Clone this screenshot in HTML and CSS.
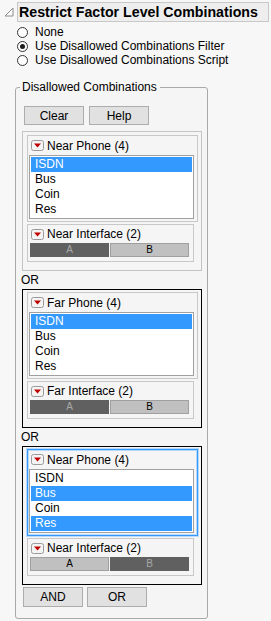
FILE: index.html
```html
<!DOCTYPE html>
<html>
<head>
<meta charset="UTF-8">
<meta name="viewport" content="width=device-width, initial-scale=1.0">
<title>Restrict Factor Level Combinations</title>
<link rel="stylesheet" href="styles.css">
</head>

<body>
<div class="outline">
    <svg class="disclosure" width="10" height="10" viewBox="0 0 10 10"><polygon points="9,1 9,9 1,9" fill="#fafafa" stroke="#8c8c8c"/></svg>
    <h1 class="title">Restrict Factor Level Combinations</h1>
</div>

<div class="choices">
    <div class="choice"><span class="radio"></span>None</div>
    <div class="choice"><span class="radio on"></span>Use Disallowed Combinations Filter</div>
    <div class="choice"><span class="radio"></span>Use Disallowed Combinations Script</div>
</div>

<fieldset class="group">
    <legend>Disallowed Combinations</legend>
    <div class="buttons top"><button>Clear</button><button>Help</button></div>

    <div class="block idle">
        <div class="panel">
            <div class="head"><svg class="menu" width="13" height="11" viewBox="0 0 13 11"><rect x="0.5" y="0.5" width="12" height="10" rx="2" fill="#f4f4f4" stroke="#9a9a9a"/><polygon points="3,3.5 10,3.5 6.5,7.5" fill="#c00000"/></svg>Near Phone (4)</div>
            <ul class="list">
                <li class="sel">ISDN</li>
                <li>Bus</li>
                <li>Coin</li>
                <li>Res</li>
            </ul>
        </div>
        <div class="panel iface">
            <div class="head"><svg class="menu" width="13" height="11" viewBox="0 0 13 11"><rect x="0.5" y="0.5" width="12" height="10" rx="2" fill="#f4f4f4" stroke="#9a9a9a"/><polygon points="3,3.5 10,3.5 6.5,7.5" fill="#c00000"/></svg>Near Interface (2)</div>
            <div class="levels"><span class="lvl dark">A</span><span class="lvl">B</span></div>
        </div>
    </div>

    <div class="or">OR</div>

    <div class="block">
        <div class="panel">
            <div class="head"><svg class="menu" width="13" height="11" viewBox="0 0 13 11"><rect x="0.5" y="0.5" width="12" height="10" rx="2" fill="#f4f4f4" stroke="#9a9a9a"/><polygon points="3,3.5 10,3.5 6.5,7.5" fill="#c00000"/></svg>Far Phone (4)</div>
            <ul class="list">
                <li class="sel">ISDN</li>
                <li>Bus</li>
                <li>Coin</li>
                <li>Res</li>
            </ul>
        </div>
        <div class="panel iface">
            <div class="head"><svg class="menu" width="13" height="11" viewBox="0 0 13 11"><rect x="0.5" y="0.5" width="12" height="10" rx="2" fill="#f4f4f4" stroke="#9a9a9a"/><polygon points="3,3.5 10,3.5 6.5,7.5" fill="#c00000"/></svg>Far Interface (2)</div>
            <div class="levels"><span class="lvl dark">A</span><span class="lvl">B</span></div>
        </div>
    </div>

    <div class="or">OR</div>

    <div class="block">
        <div class="panel active">
            <div class="head"><svg class="menu" width="13" height="11" viewBox="0 0 13 11"><rect x="0.5" y="0.5" width="12" height="10" rx="2" fill="#f4f4f4" stroke="#9a9a9a"/><polygon points="3,3.5 10,3.5 6.5,7.5" fill="#c00000"/></svg>Near Phone (4)</div>
            <ul class="list">
                <li>ISDN</li>
                <li class="sel">Bus</li>
                <li>Coin</li>
                <li class="sel">Res</li>
            </ul>
        </div>
        <div class="panel iface">
            <div class="head"><svg class="menu" width="13" height="11" viewBox="0 0 13 11"><rect x="0.5" y="0.5" width="12" height="10" rx="2" fill="#f4f4f4" stroke="#9a9a9a"/><polygon points="3,3.5 10,3.5 6.5,7.5" fill="#c00000"/></svg>Near Interface (2)</div>
            <div class="levels"><span class="lvl">A</span><span class="lvl dark">B</span></div>
        </div>
    </div>

    <div class="buttons bottom"><button>AND</button><button>OR</button></div>
</fieldset>
</body>
</html>
```

FILE: styles.css
```css
body { margin:0; width:271px; background:#f7f7f7; font-family:"Liberation Sans", Arial, sans-serif; font-size:12px; color:#000; }

.outline { display:flex; align-items:center; padding:2px 2px 0 4px; }
.disclosure { margin-right:3px; flex:none; }
.title { flex:1; margin:0; height:20px; box-sizing:border-box; padding-left:1px; background:#eeeeee; border:1px solid #c8c8c8; font-size:14.2px; font-weight:bold; line-height:18px; white-space:nowrap; }

.choices { padding:3px 0 0 17px; }
.choice { display:flex; align-items:center; height:14px; line-height:14px; }
.radio { width:11px; height:11px; box-sizing:border-box; margin-right:7px; border:1px solid #333; border-radius:50%; background:#fff; display:flex; align-items:center; justify-content:center; }
.radio.on::after { content:""; width:5px; height:5px; border-radius:50%; background:#1f1f1f; }

.group { margin:13px 0 0 15px; width:193px; box-sizing:border-box; min-width:0; padding:0 5px 11px 6px; border:1px solid #a9a9a9; border-radius:3px; background:#f5f5f5; }
.group legend { padding:0 3px 0 2px; margin-left:-2px; line-height:15px; }

.buttons { display:flex; }
.buttons.top { gap:5px; margin:11px 0 0 2px; }
.buttons.bottom { gap:4px; margin:2px 0 0 1px; }
.buttons button { width:60px; height:19px; padding:0; background:#e1e1e1; border:1px solid #adadad; border-radius:0; font:inherit; color:#000; }
.buttons.bottom button { height:20px; }

.block { margin-top:6px; border:1px solid #000; padding:2px 3px 8px 4px; }
.block.idle { border-color:#c4c4c4; padding-top:3px; }
.or { height:18px; line-height:18px; margin-left:-1px; }
.or + .block { margin-top:0; }

.panel { width:171px; box-sizing:border-box; padding:0 3px 2px 1px; border:1px solid #c8c8c8; }
.panel.active { border-color:#3399ff; box-shadow:0 0 0 1px #b9d9fb, inset 0 0 0 1px #b9d9fb; }
.panel.iface { width:167px; margin-top:2px; padding:0 4px 4px 1px; }
.head { display:flex; align-items:center; height:19px; padding-left:2px; white-space:nowrap; }
.iface .head { height:18px; }
.menu { flex:none; margin-right:3px; }

.list { margin:0; padding:1px; list-style:none; width:165px; box-sizing:border-box; border:1px solid #a0a0a0; background:#fff; }
.list li { height:15px; line-height:15px; padding-left:4px; }
.list li.sel { background:#3399ff; color:#fff; }

.levels { display:flex; gap:1px; margin-left:1px; }
.lvl { width:79px; height:14px; box-sizing:border-box; border:1px solid #a0a0a0; background:#c0c0c0; font-size:10px; line-height:12px; text-align:center; }
.lvl.dark { background:#606060; border-color:#606060; color:#a8a8a8; }
```
